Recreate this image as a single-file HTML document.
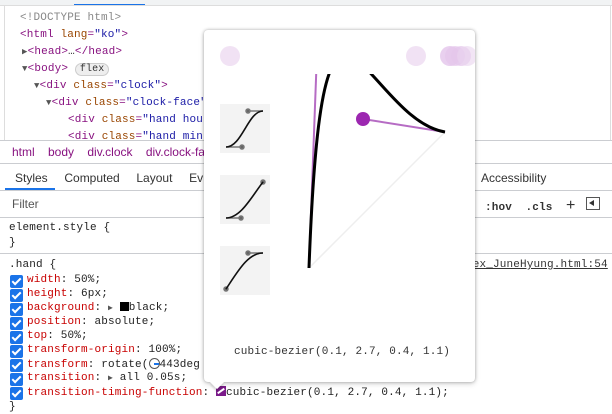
<!DOCTYPE html>
<html><head><meta charset="utf-8"><style>
*{margin:0;padding:0;box-sizing:border-box}
body{width:612px;height:414px;overflow:hidden;background:#fff;position:relative;font-family:"Liberation Mono",monospace;font-size:11px;color:#222}
.a{position:absolute;white-space:pre;letter-spacing:.15px}
.s{font-family:"Liberation Sans",sans-serif;font-size:12px;letter-spacing:0}
.tg{color:#881280}.at{color:#994500}.av{color:#1a1aa6}.g{color:#888}
.pn{color:#c80000}
.cb{position:absolute;left:10px;width:13px;height:13px;background:#1a73e8;border-radius:2px}
.cb:after{content:"";position:absolute;left:4px;top:1px;width:3px;height:7px;border:solid #fff;border-width:0 2px 2px 0;transform:rotate(45deg)}
.hl{position:absolute;left:0;width:612px;height:1px;background:#cbcdd1}
</style></head><body>
<div style="position:absolute;left:0;top:0;width:612px;height:5px;background:#f1f3f4"></div>
<div style="position:absolute;left:74px;top:4px;width:71px;height:2px;background:#1a73e8"></div>
<div class="hl" style="top:5px;background:#ddd"></div>
<div style="position:absolute;left:4px;top:5px;width:1px;height:409px;background:#ddd"></div>
<div style="position:absolute;left:610px;top:5px;width:1px;height:409px;background:#ddd"></div>

<div class="a g" style="left:20px;top:12px">&lt;!DOCTYPE html&gt;</div>
<div class="a tg" style="left:20px;top:29px">&lt;html <span class="at">lang</span>=<span class="av">"ko"</span>&gt;</div>
<div class="a tg" style="left:22px;top:46px"><span style="color:#555;font-size:9px">▶</span>&lt;head&gt;<span style="color:#333">…</span>&lt;/head&gt;</div>
<div class="a tg" style="left:22px;top:63px"><span style="color:#555;font-size:9px">▼</span>&lt;body&gt; <span style="display:inline-block;background:#eee;border:1px solid #ccc;border-radius:7px;color:#333;font-size:10px;line-height:11px;padding:0 4px">flex</span></div>
<div class="a tg" style="left:34px;top:80px"><span style="color:#555;font-size:9px">▼</span>&lt;div <span class="at">class</span>=<span class="av">"clock"</span>&gt;</div>
<div class="a tg" style="left:46px;top:97px"><span style="color:#555;font-size:9px">▼</span>&lt;div <span class="at">class</span>=<span class="av">"clock-face"</span>&gt;</div>
<div class="a tg" style="left:68px;top:114px">&lt;div <span class="at">class</span>=<span class="av">"hand hour</span></div>
<div class="a tg" style="left:68px;top:131px">&lt;div <span class="at">class</span>=<span class="av">"hand min-</span></div>
<div style="position:absolute;left:0;top:140px;width:612px;height:274px;background:#fff"></div>
<div class="hl" style="top:140px"></div>
<div class="a s tg" style="left:12px;top:145px">html&nbsp;&nbsp;&nbsp; body&nbsp;&nbsp;&nbsp; div.clock&nbsp;&nbsp;&nbsp; div.clock-face</div>
<div class="hl" style="top:163px"></div>
<div class="a s" style="left:15px;top:171px;color:#333">Styles&nbsp;&nbsp;&nbsp;&nbsp; Computed&nbsp;&nbsp;&nbsp;&nbsp; Layout&nbsp;&nbsp;&nbsp;&nbsp; Ev</div>
<div class="a s" style="left:481px;top:171px;color:#333">Accessibility</div>
<div style="position:absolute;left:5px;top:188px;width:50px;height:2px;background:#1a73e8"></div>
<div class="hl" style="top:190px"></div>
<div class="a s" style="left:12px;top:197px;color:#555">Filter</div>
<div class="a" style="left:485px;top:197px;font-weight:bold;color:#333">:hov&nbsp; .cls&nbsp; <span style="font-family:'Liberation Sans';font-size:16px;font-weight:normal">+</span></div>
<div style="position:absolute;left:586px;top:197px;width:14px;height:13px;border:1px solid #555"><div style="position:absolute;left:2px;top:2px;border-right:5px solid #333;border-top:3.5px solid transparent;border-bottom:3.5px solid transparent"></div></div>
<div class="hl" style="top:217px"></div>
<div class="a" style="left:9px;top:222px">element.style {</div>
<div class="a" style="left:9px;top:237px">}</div>
<div class="hl" style="top:253px"></div>
<div class="a" style="left:9px;top:259px">.hand {</div>
<div class="a" style="left:466px;top:259px;text-decoration:underline;color:#333">lex_JuneHyung.html:54</div>
<div class="cb" style="top:275px"></div><div class="a" style="left:27px;top:274px"><span class="pn">width</span>: 50%;</div>
<div class="cb" style="top:289px"></div><div class="a" style="left:27px;top:288px"><span class="pn">height</span>: 6px;</div>
<div class="cb" style="top:303px"></div><div class="a" style="left:27px;top:302px"><span class="pn">background</span>: <span style="font-size:8px;color:#555">▶</span> <span style="display:inline-block;width:9px;height:9px;background:#000;vertical-align:-1px"></span>black;</div>
<div class="cb" style="top:317px"></div><div class="a" style="left:27px;top:316px"><span class="pn">position</span>: absolute;</div>
<div class="cb" style="top:331px"></div><div class="a" style="left:27px;top:330px"><span class="pn">top</span>: 50%;</div>
<div class="cb" style="top:345px"></div><div class="a" style="left:27px;top:344px"><span class="pn">transform-origin</span>: 100%;</div>
<div class="cb" style="top:359px"></div><div class="a" style="left:27px;top:358px"><span class="pn">transform</span>: rotate(<span style="display:inline-block;width:11px;height:11px;border:1px solid #555;border-radius:50%;vertical-align:-2px;position:relative"><span style="position:absolute;left:4px;top:4px;width:5px;height:2px;background:#1a73e8"></span></span>443deg</div>
<div class="cb" style="top:373px"></div><div class="a" style="left:27px;top:372px"><span class="pn">transition</span>: <span style="font-size:8px;color:#555">▶</span> all 0.05s;</div>
<div class="cb" style="top:387px"></div><div class="a" style="left:27px;top:386px"><span class="pn">transition-timing-function</span>: <span style="display:inline-block;width:10px;height:10px;background:#7b1a8a;vertical-align:-1px;position:relative"><span style="position:absolute;left:1px;top:4px;width:8px;height:2px;background:#fff;transform:rotate(-35deg)"></span></span>cubic-bezier(0.1, 2.7, 0.4, 1.1);</div>
<div class="a" style="left:9px;top:401px">}</div>

<!-- popup -->
<div style="position:absolute;left:204px;top:30px;width:271px;height:352px;background:#fff;border-radius:4px;box-shadow:0 0 3px rgba(0,0,0,.3),0 2px 6px rgba(0,0,0,.15)"></div>
<div style="position:absolute;left:212px;top:377px;width:10px;height:10px;background:#fff;transform:rotate(45deg);box-shadow:2px 2px 2px rgba(0,0,0,.15)"></div>
<svg style="position:absolute;left:0;top:0" width="612" height="414">
<defs><clipPath id="c"><rect x="204" y="74" width="271" height="300"/></clipPath><clipPath id="t"><rect x="204" y="30" width="271" height="60"/></clipPath>
<linearGradient id="lg" x1="0" y1="1" x2="0" y2="0"><stop offset="0" stop-color="#5a1a66"/><stop offset=".4" stop-color="#000"/></linearGradient></defs>
<g clip-path="url(#t)">
<circle cx="230" cy="56" r="10" fill="#f1e2f4"/>
<circle cx="416" cy="56" r="10" fill="#f1e2f4"/>
<circle cx="450" cy="56" r="10" fill="#e9d0ef"/><circle cx="455" cy="56" r="10" fill="#e4c6eb" opacity=".7"/><circle cx="461" cy="56" r="10" fill="#e4c6eb" opacity=".7"/><circle cx="467" cy="56" r="10" fill="#ead4ef" opacity=".6"/>
</g>
<rect x="220" y="104" width="50" height="49" fill="#f3f3f3"/>
<rect x="220" y="175" width="50" height="49" fill="#f3f3f3"/>
<rect x="220" y="246" width="50" height="49" fill="#f3f3f3"/>
<g stroke="#777" stroke-width="1.5" fill="#666">
<line x1="226" y1="147" x2="242" y2="147"/><circle cx="242" cy="147" r="2"/>
<line x1="263" y1="111" x2="248" y2="111"/><circle cx="248" cy="111" r="2"/>
<line x1="226" y1="218" x2="241" y2="218"/><circle cx="241" cy="218" r="2"/><circle cx="263" cy="182" r="2"/>
<line x1="263" y1="253" x2="248" y2="253"/><circle cx="248" cy="253" r="2"/><circle cx="226" cy="289" r="2"/>
</g>
<g stroke="#111" stroke-width="1.6" fill="none">
<path d="M226 147 C242 147 248 111 263 111"/>
<path d="M226 218 C241 218 252 196 263 182"/>
<path d="M226 289 C238 271 248 253 263 253"/>
</g>
<g clip-path="url(#c)">
<line x1="309" y1="268" x2="445" y2="132" stroke="#eee" stroke-width="1.5"/>
<line x1="309" y1="268" x2="322.6" y2="-99" stroke="#b66cc4" stroke-width="2"/>
<line x1="363" y1="119" x2="445" y2="132" stroke="#b66cc4" stroke-width="2"/>
<path d="M309 268 C322.6 -99 363.4 118.4 445 132" stroke="#000" stroke-width="3" fill="none"/>
<circle cx="363" cy="119" r="7" fill="#9c27b0"/>
</g>
</svg>
<div class="a" style="left:234px;top:346px;color:#333">cubic-bezier(0.1, 2.7, 0.4, 1.1)</div>
</body></html>
